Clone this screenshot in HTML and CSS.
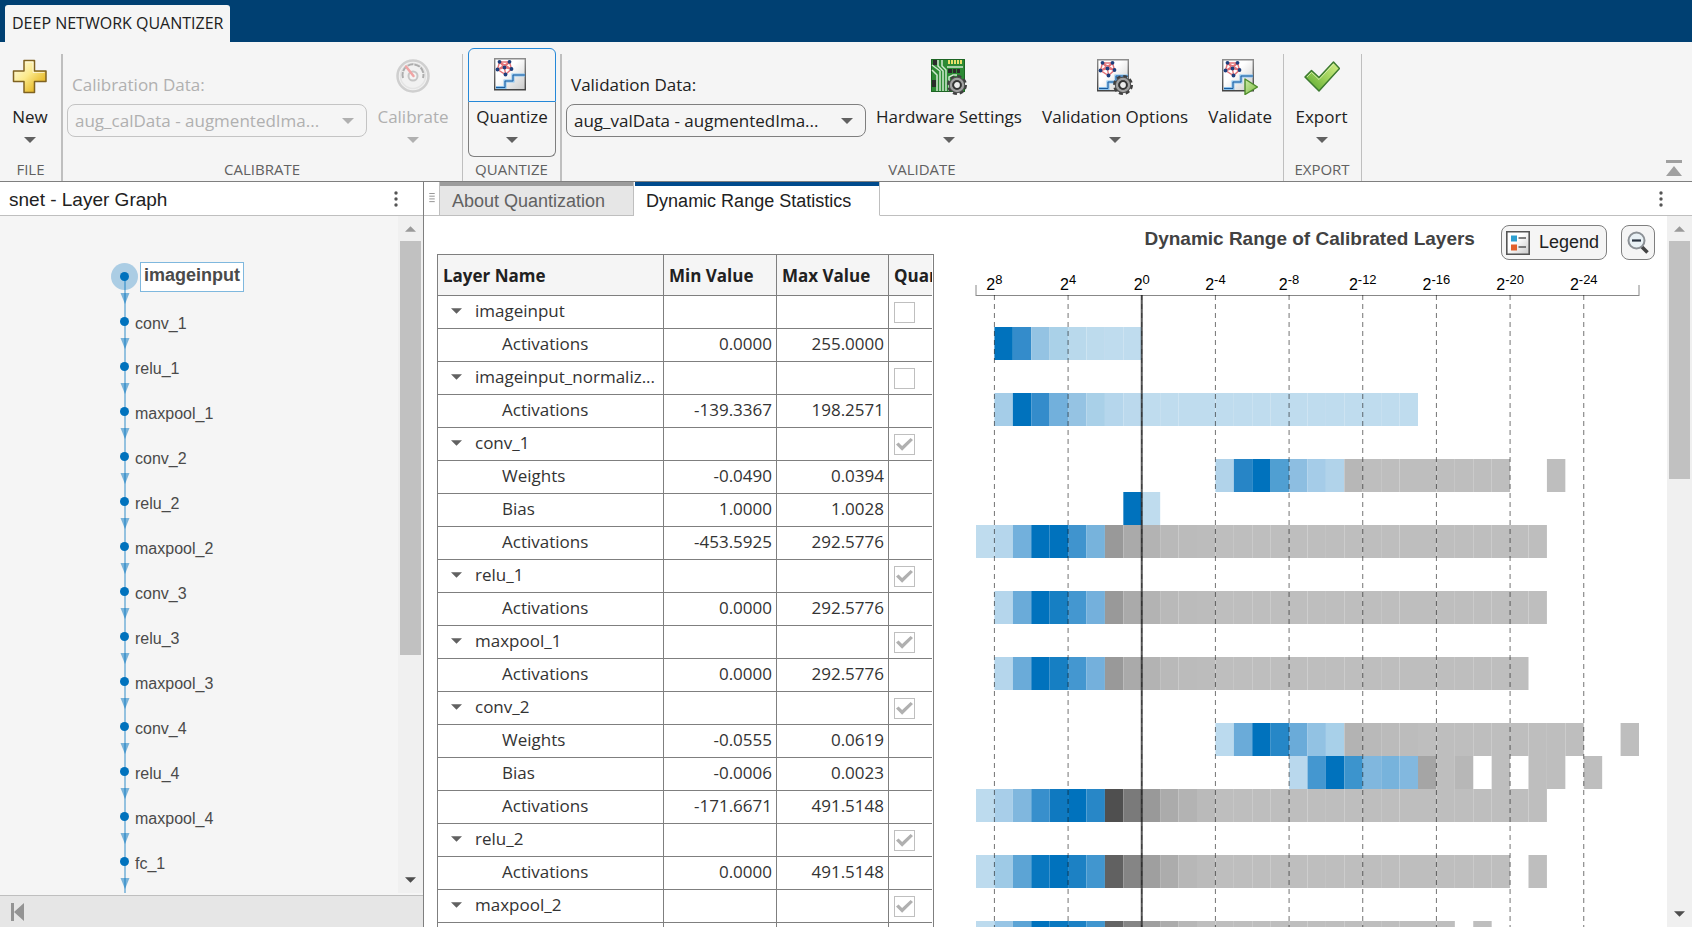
FILE: index.html
```html
<!DOCTYPE html>
<html lang="en">
<head>
<meta charset="utf-8">
<title>Deep Network Quantizer</title>
<link rel="stylesheet" href="styles.css">
</head>
<body>
<svg class="defs" aria-hidden="true">
  <defs>
    <linearGradient id="gold" x1="0" y1="0" x2="1" y2="1"><stop offset="0" stop-color="#fffef0"/><stop offset=".45" stop-color="#fbe98a"/><stop offset=".75" stop-color="#e9bf35"/><stop offset="1" stop-color="#dfa92a"/></linearGradient>
    <linearGradient id="paper" x1="0" y1="0" x2="1" y2="1"><stop offset=".4" stop-color="#ffffff"/><stop offset="1" stop-color="#c9c9c9"/></linearGradient>
    <linearGradient id="frame" x1="0" y1="0" x2="0" y2="1"><stop offset="0" stop-color="#8c8c8c"/><stop offset="1" stop-color="#454545"/></linearGradient>
    <linearGradient id="leaf" x1="1" y1="0" x2="0" y2="1"><stop offset="0" stop-color="#d5ee8a"/><stop offset=".5" stop-color="#9bd058"/><stop offset="1" stop-color="#4ea02a"/></linearGradient>
    <linearGradient id="play" x1="0" y1="0" x2="1" y2="1"><stop offset="0" stop-color="#cdebaa"/><stop offset="1" stop-color="#7cba3c"/></linearGradient>
    <symbol id="caret" viewBox="0 0 12 6"><path d="M0 0h12L6 6z" fill="currentColor"/></symbol>
    <symbol id="dots" viewBox="0 0 4 16"><g fill="#555"><circle cx="2" cy="2" r="1.7"/><circle cx="2" cy="8" r="1.7"/><circle cx="2" cy="14" r="1.7"/></g></symbol>
    <symbol id="net" viewBox="0 0 36 36">
      <path d="M.7 .7h30.6v31H.7z" fill="url(#paper)" stroke="url(#frame)" stroke-width="1.4"/>
      <path d="M2 29.500H11V23h8v-6h12" fill="none" stroke="#8cc4ee" stroke-width="3"/>
      <path d="M2 29.500H11V23h8v-6h12" fill="none" stroke="#1c5b9c" stroke-width="1"/>
      <path d="M5.500 4 15.500 4 17.500 11 11.500 16.500 3.500 11.500zM5.500 4 10.500 9.500 15.500 4M3.500 11.500 10.500 9.500 17.500 11M10.500 9.500l1 7M5.500 4 17.500 11M15.500 4 3.500 11.500" fill="none" stroke="#dc4f55" stroke-opacity=".8" stroke-width="1.400"/>
      <g fill="#1e3f7d"><circle cx="5.500" cy="3.800" r="1.900"/><circle cx="15.500" cy="3.800" r="1.900"/><circle cx="17.500" cy="11" r="1.900"/><circle cx="11.500" cy="16.500" r="1.900"/><circle cx="3.500" cy="11.500" r="1.900"/><circle cx="10.500" cy="9.500" r="1.900"/></g>
    </symbol>
    <symbol id="gear" viewBox="0 0 20 20">
      <circle cx="10" cy="10" r="8.200" fill="none" stroke="#3f3f3f" stroke-width="3.600" stroke-dasharray="3.800 2.640"/>
      <circle cx="10" cy="10" r="6" fill="#d2d2d2" stroke="#4d4d4d" stroke-width="4.400"/>
      <circle cx="10" cy="10" r="6" fill="none" stroke="#a0a0a0" stroke-width="2.400"/>
      <circle cx="10" cy="10" r="3.800" fill="#ececec" stroke="#333" stroke-width="1.800"/>
    </symbol>
    <symbol id="node" viewBox="0 0 25 45" overflow="visible">
      <path d="M15 14v45" stroke="#0072bd" stroke-opacity=".4" stroke-width="2"/>
      <path d="M10.500 31h9l-4.500 11z" fill="#0072bd" fill-opacity=".5"/>
      <circle cx="14.500" cy="14.500" r="4.500" fill="#0072bd"/>
    </symbol>
  </defs>
</svg>

<div class="app">
  <header class="titlebar">
    <button class="app-tab" type="button">DEEP NETWORK QUANTIZER</button>
  </header>

  <div class="ribbon">
    <section class="group group-file">
      <div class="group-body">
        <button class="tool" type="button">
          <svg class="icon" viewBox="0 0 36 36"><path d="M12 1.500h10.500v10.500H34v10.500H22.500v11H12v-11H1.500V12H12z" fill="url(#gold)" stroke="#7f6220" stroke-width="1.500" stroke-linejoin="round"/><path d="M13.500 3h7.500v10.500h11.500" fill="none" stroke="#fff" stroke-opacity=".6"/></svg>
          <span class="tool-label">New</span>
          <svg class="caret"><use href="#caret"/></svg>
        </button>
      </div>
      <h2 class="group-title">FILE</h2>
    </section>
    <section class="group group-calibrate">
      <div class="group-body">
        <div class="field is-disabled">
          <label for="cal-data">Calibration Data:</label>
          <div class="select-box">
            <select id="cal-data" disabled><option>aug_calData - augmentedIma...</option></select>
            <svg class="caret"><use href="#caret"/></svg>
          </div>
        </div>
        <button class="tool is-disabled" type="button" disabled>
          <svg class="icon" viewBox="0 0 36 36"><circle cx="18" cy="17" r="15.500" fill="#f1f1f1" stroke="#cfcfcf" stroke-width="2.500"/><circle cx="18" cy="17" r="12.500" fill="none" stroke="#e4e4e4" stroke-width="1.500"/><path d="M8 19a10.500 10.500 0 1 1 20 0" fill="none" stroke="#adadad" stroke-width="2" stroke-dasharray="6 1"/><circle cx="18" cy="17" r="4.500" fill="#f4f4f4" stroke="#c6c6c6" stroke-width="2"/><path d="M11 7.500l7.500 9.500" stroke="#f0a4a4" stroke-width="2.500" stroke-linecap="round"/></svg>
          <span class="tool-label">Calibrate</span>
          <svg class="caret"><use href="#caret"/></svg>
        </button>
      </div>
      <h2 class="group-title">CALIBRATE</h2>
    </section>
    <section class="group group-quantize">
      <div class="group-body">
        <div class="split">
          <button class="split-main" type="button" aria-label="Quantize"><svg class="icon"><use href="#net"/></svg></button>
          <button class="split-menu" type="button"><span class="tool-label">Quantize</span><svg class="caret"><use href="#caret"/></svg></button>
        </div>
      </div>
      <h2 class="group-title">QUANTIZE</h2>
    </section>
    <section class="group group-validate">
      <div class="group-body">
        <div class="field">
          <label for="val-data">Validation Data:</label>
          <div class="select-box">
            <select id="val-data"><option>aug_valData - augmentedIma...</option></select>
            <svg class="caret"><use href="#caret"/></svg>
          </div>
        </div>
        <button class="tool" type="button">
          <svg class="icon" viewBox="0 0 36 36"><path d="M0 0h34v33H0z" fill="#2c8a34"/><path d="M.5 .5h33v32H.5z" fill="none" stroke="#1d6424"/><path d="M2 1h4v5H2zM1 21h4v7H1zM17 10h4v4h-4zM22 10h3v4h-3zM26 10h3v4h-3z" fill="#2b2b2b"/><path d="M17 1h2v4h-2zM20 1h2v4h-2zM23 1h2v4h-2zM26 1h2v4h-2zM29 1h2v4h-2z" fill="#e8e06a"/><path d="M1 6l8 6v20M1 11l5 5v16M7 1v6l5 5v20M11 1v6l4 4v21M16 8h16M18 32V18l4-2h4" fill="none" stroke="#cfe8cf" stroke-width="1.500"/><use href="#gear" x="16" y="16" width="20" height="20"/></svg>
          <span class="tool-label">Hardware Settings</span>
          <svg class="caret"><use href="#caret"/></svg>
        </button>
        <button class="tool" type="button">
          <svg class="icon" viewBox="0 0 36 36"><use href="#net" width="36" height="36"/><use href="#gear" x="16" y="16" width="20" height="20"/></svg>
          <span class="tool-label">Validation Options</span>
          <svg class="caret"><use href="#caret"/></svg>
        </button>
        <button class="tool" type="button">
          <svg class="icon" viewBox="0 0 36 36"><use href="#net" width="36" height="36"/><path d="M23 20l12.500 8L23 35.500z" fill="url(#play)" stroke="#4c8a2a" stroke-width="1.400" stroke-linejoin="round"/></svg>
          <span class="tool-label">Validate</span>
        </button>
      </div>
      <h2 class="group-title">VALIDATE</h2>
    </section>
    <section class="group group-export">
      <div class="group-body">
        <button class="tool" type="button">
          <svg class="icon" viewBox="0 0 36 36"><path d="M1 18l6.500-6.500 7.500 7L29.500 3l6 6.500L15 32z" fill="url(#leaf)" stroke="#3c7a30" stroke-width="1.500" stroke-linejoin="round"/><path d="M3 18l4.500-4.500 7.500 7L29.500 5" fill="none" stroke="#e6f5c8" stroke-opacity=".7"/></svg>
          <span class="tool-label">Export</span>
          <svg class="caret"><use href="#caret"/></svg>
        </button>
      </div>
      <h2 class="group-title">EXPORT</h2>
    </section>
    <button class="collapse" type="button" aria-label="Collapse toolstrip"><svg viewBox="0 0 16 16"><path d="M0 0h16v3H0zM8 6l8 10H0z" fill="#a0a0a0"/></svg></button>
  </div>

  <div class="workspace">
    <aside class="graph-panel">
      <div class="panel-head">
        <h1>snet - Layer Graph</h1>
        <button class="more" type="button" aria-label="Layer graph options"><svg><use href="#dots"/></svg></button>
      </div>
      <div class="graph-body">
        <ol class="layers">
          <li class="selected"><svg><circle cx="14.500" cy="14.500" r="13.500" fill="#0072bd" fill-opacity=".3"/><use href="#node" width="25" height="45"/></svg><span>imageinput</span></li>
          <li><svg><use href="#node"/></svg><span>conv_1</span></li>
          <li><svg><use href="#node"/></svg><span>relu_1</span></li>
          <li><svg><use href="#node"/></svg><span>maxpool_1</span></li>
          <li><svg><use href="#node"/></svg><span>conv_2</span></li>
          <li><svg><use href="#node"/></svg><span>relu_2</span></li>
          <li><svg><use href="#node"/></svg><span>maxpool_2</span></li>
          <li><svg><use href="#node"/></svg><span>conv_3</span></li>
          <li><svg><use href="#node"/></svg><span>relu_3</span></li>
          <li><svg><use href="#node"/></svg><span>maxpool_3</span></li>
          <li><svg><use href="#node"/></svg><span>conv_4</span></li>
          <li><svg><use href="#node"/></svg><span>relu_4</span></li>
          <li><svg><use href="#node"/></svg><span>maxpool_4</span></li>
          <li><svg><use href="#node"/></svg><span>fc_1</span></li>
        </ol>
        <div class="scrollbar">
          <svg class="scroll-arrow up"><use href="#caret"/></svg>
          <div class="scroll-track"><div class="scroll-thumb graph-thumb"></div></div>
          <svg class="scroll-arrow"><use href="#caret"/></svg>
        </div>
      </div>
      <div class="graph-foot">
        <button type="button" aria-label="Collapse panel"><svg viewBox="0 0 14 18"><path d="M0 0h3v18H0zM13 0v18L3 9z" fill="#949494"/></svg></button>
      </div>
    </aside>

    <main class="docs">
      <div class="doc-tabs">
        <svg class="grip" viewBox="0 0 6 11"><path d="M0 .5h6M0 3.500h6M0 6.500h6M0 9.500h6" stroke="#8a8a8a"/></svg>
        <button class="doc-tab" type="button">About Quantization</button>
        <button class="doc-tab active" type="button">Dynamic Range Statistics</button>
        <div class="tab-rest"><button class="more" type="button" aria-label="Document options"><svg><use href="#dots"/></svg></button></div>
      </div>
      <div class="doc-body">
        <div class="doc-content">
          <div class="table-frame">
            <div class="table-clip">
              <table>
                <colgroup><col class="col-name"><col class="col-min"><col class="col-max"><col class="col-quant"></colgroup>
                <thead><tr><th scope="col">Layer Name</th><th scope="col">Min Value</th><th scope="col">Max Value</th><th scope="col">Quantize</th></tr></thead>
                <tbody id="rows"></tbody>
              </table>
            </div>
          </div>
          <div class="chart">
            <div class="chart-head">
              <h2>Dynamic Range of Calibrated Layers</h2>
              <button class="chart-button" type="button">
                <svg width="24" height="24" viewBox="0 0 24 24"><path d="M.8 .8h22.400v22.400H.8z" fill="url(#paper)" stroke="#555" stroke-width="1.600"/><path d="M5 4.500h6v6H5z" fill="#2d9fd0"/><path d="M5 13.500h6v6H5z" fill="#e2602c"/><path d="M12.500 7h7.500M12.500 16h7.500" stroke="#555" stroke-width="1.500"/></svg>
                Legend
              </button>
              <button class="chart-button zoom" type="button" aria-label="Zoom out">
                <svg width="24" height="24" viewBox="0 0 24 24"><path d="M15 15l6.500 6.500" stroke="#444" stroke-width="3.500"/><circle cx="10.500" cy="9.500" r="8" fill="#e9f1f5" stroke="#8c9196" stroke-width="2"/><path d="M6 9.500h9" stroke="#2a3440" stroke-width="2.200"/></svg>
              </button>
            </div>
            <svg class="plot" id="plot" role="img" aria-label="Dynamic range histogram of calibrated layers"></svg>
          </div>
        </div>
        <div class="scrollbar">
          <svg class="scroll-arrow up"><use href="#caret"/></svg>
          <div class="scroll-track"><div class="scroll-thumb doc-thumb"></div></div>
          <svg class="scroll-arrow"><use href="#caret"/></svg>
        </div>
      </div>
    </main>
  </div>
</div>
<script src="script.js"></script>
</body>
</html>
```

FILE: styles.css
```css
* { box-sizing: border-box; }

body {
  margin: 0;
  height: 100vh;
  overflow: hidden;
  background: #fff;
  color: #212121;
  font-family: "Open Sans", "Noto Sans", sans-serif;
  font-size: 17px;
}

h1, h2 { margin: 0; font-weight: 400; }

button {
  margin: 0;
  padding: 0;
  border: 0;
  background: none;
  color: inherit;
  font: inherit;
}

svg { display: block; flex: none; }

.defs { position: absolute; width: 0; height: 0; }

.app {
  display: flex;
  flex-direction: column;
  height: 100vh;
}

/* Title bar */
.titlebar {
  display: flex;
  flex: none;
  height: 42px;
  padding: 5px 5px 0;
  background: #004072;
}

.app-tab {
  padding: 0 7px 2px;
  border-radius: 3px 3px 0 0;
  background: #f5f5f5;
  font-size: 16px;
}

/* Toolstrip */
.ribbon {
  display: flex;
  flex: none;
  height: 140px;
  border-bottom: 1px solid #7f7f7f;
  background: #f5f5f5;
}

.group {
  display: flex;
  flex: none;
  flex-direction: column;
  padding-top: 6px;
  background: linear-gradient(#bfbfbf, #bfbfbf) right 12px / 1px 100% no-repeat;
}

.group-file { width: 63px; background-size: 2px 100%; }
.group-calibrate { width: 400px; }
.group-quantize { width: 99px; background-size: 2px 100%; }
.group-validate { width: 722px; }
.group-export { width: 78px; }

.group-body {
  display: flex;
  justify-content: space-evenly;
  height: 109px;
  padding: 0 4px;
}

.group-file .group-body, .group-export .group-body { padding-right: 7px; }
.group-quantize .group-body { padding: 0 6px 0 5px; }
.group-validate .group-body { padding-right: 2px; }

.group-title {
  padding-right: 2px;
  color: #616161;
  font-size: 15px;
  line-height: 24px;
  text-align: center;
}

.tool {
  display: flex;
  flex: 1 0 auto;
  flex-direction: column;
  align-items: center;
  padding-top: 11px;
}

.icon { width: 36px; height: 36px; }

.tool-label {
  margin-top: 10px;
  line-height: 24px;
  white-space: nowrap;
}

.caret {
  width: 12px;
  height: 6px;
  margin-top: 8px;
  color: #616161;
}

.is-disabled, .is-disabled .caret, .is-disabled select { color: #b0b0b0; opacity: 1; }

.field {
  display: flex;
  flex: none;
  flex-direction: column;
  width: 300px;
  padding-top: 24px;
}

.field label { padding-left: 5px; line-height: 26px; }

.select-box { display: grid; align-items: center; margin-top: 6px; }

.select-box > * { grid-area: 1 / 1; }

.select-box select {
  appearance: none;
  height: 33px;
  padding: 0 40px 0 7px;
  border: 1px solid #7f7f7f;
  border-radius: 8px;
  background: #f5f5f5;
  color: #212121;
  font: inherit;
}

.select-box .caret { justify-self: end; margin: 0 13px 0 0; pointer-events: none; }

.is-disabled .select-box select { border-color: #c4c4c4; color: #b0b0b0; }

.split { display: flex; flex: 1; flex-direction: column; }

.split-main {
  display: flex;
  justify-content: center;
  height: 54px;
  padding-top: 9px;
  border: 1px solid #2488d8;
  border-radius: 6px 6px 0 0;
}

.split-menu {
  display: flex;
  flex: 1;
  flex-direction: column;
  align-items: center;
  border: 1px solid #7f7f7f;
  border-top: 0;
  border-radius: 0 0 6px 6px;
}

.split-menu .tool-label { margin-top: 3px; }

.collapse { align-self: flex-end; margin: 0 10px 5px auto; }
.collapse svg { width: 16px; height: 16px; }

/* Workspace */
.workspace { display: flex; flex: 1; min-height: 0; }

.graph-panel {
  display: flex;
  flex: none;
  flex-direction: column;
  box-sizing: content-box;
  width: 25%;
  border-right: 1px solid #7f7f7f;
  font-family: "Liberation Sans", Arial, sans-serif;
}

.panel-head {
  display: flex;
  flex: none;
  align-items: center;
  justify-content: space-between;
  height: 34px;
  padding: 0 25px 0 9px;
  border-bottom: 1px solid #bfbfbf;
}

.panel-head h1 { padding-top: 3px; font-size: 19px; }

.more svg { width: 4px; height: 16px; }

.graph-body {
  display: flex;
  flex: 1;
  min-height: 0;
  background: #f5f5f5;
}

.layers {
  flex: 1;
  margin: 0 0 2px;
  padding: 46px 0 0 110px;
  overflow: hidden;
  list-style: none;
  color: #4a4a4a;
  font-size: 16px;
}

.layers li { display: flex; height: 45px; }

.layers svg { width: 25px; height: 45px; overflow: visible; }

.layers span { line-height: 34px; }

.layers .selected span {
  height: 30px;
  margin-left: 5px;
  padding: 0 3px;
  border: 1px solid #7fb8de;
  background: #fff;
  font-size: 18px;
  font-weight: 700;
  line-height: 25px;
}

.scrollbar {
  display: flex;
  flex: none;
  flex-direction: column;
  align-items: center;
  width: 25px;
  padding: 10px 0;
  background: #f0f0f0;
  color: #4d4d4d;
}

.graph-body .scrollbar { margin-bottom: 2px; }

.scroll-arrow { width: 11px; height: 6px; }

.scroll-arrow.up { transform: rotate(180deg); color: #9a9a9a; }

.scroll-track { flex: 1; width: 21px; padding: 9px 0; }

.scroll-thumb { background: #c1c1c1; }

.graph-thumb { height: 66%; }
.doc-thumb { height: 36%; }

.graph-foot {
  display: flex;
  flex: none;
  align-items: center;
  height: 32px;
  padding-left: 11px;
  border-top: 1px solid #bfbfbf;
  background: #e6e6e6;
}

.graph-foot svg { width: 14px; height: 18px; }

/* Documents */
.docs { display: flex; flex: 1; flex-direction: column; min-width: 0; }

.doc-tabs {
  display: flex;
  flex: none;
  height: 34px;
  font-family: "Liberation Sans", Arial, sans-serif;
  font-size: 18px;
}

.grip { width: 15px; height: 34px; padding: 11px 4px 12px 5px; border-bottom: 1px solid #bfbfbf; }

.doc-tab {
  padding: 6px 28px 0 12px;
  border: solid #bfbfbf;
  border-width: 0 1px 1px;
  background: #e6e6e6;
  box-shadow: inset 0 4px #9c9c9c;
  color: #616161;
  white-space: nowrap;
}

.doc-tab.active {
  padding-left: 11px;
  border-left-color: #fff;
  border-bottom-color: #fff;
  background: #fff;
  box-shadow: inset 0 4px #004a8c;
  color: #212121;
}

.tab-rest {
  display: flex;
  flex: 1;
  align-items: center;
  justify-content: flex-end;
  padding-right: 29px;
  border-bottom: 1px solid #bfbfbf;
}

.doc-body { display: flex; flex: 1; min-height: 0; overflow: hidden; }

.doc-content {
  display: grid;
  flex: 1;
  grid-template-columns: 497px minmax(0, 1fr);
  min-width: 0;
  padding-left: 13px;
  overflow: hidden;
}

/* Statistics table */
.table-frame {
  align-self: start;
  margin-top: 38px;
  padding-right: 1px;
  border: 1px solid #7f7f7f;
}

.table-clip { overflow: hidden; }

table {
  width: 560px;
  table-layout: fixed;
  border-collapse: separate;
  border-spacing: 0;
}

.col-name { width: 226px; }
.col-min { width: 113px; }
.col-max { width: 112px; }

th, td {
  padding: 0 4px 0 5px;
  border: solid #7f7f7f;
  border-width: 0 1px 1px 0;
  white-space: nowrap;
}

th {
  height: 41px;
  background: #f5f5f5;
  font-weight: 700;
  text-align: left;
}

td { height: 33px; padding-bottom: 3px; color: #333; text-align: right; }

td.name { padding-left: 64px; text-align: left; }

td.parent { padding-left: 13px; }

.name-row { display: flex; align-items: center; gap: 13px; }

.toggle { color: #616161; }
.toggle svg { width: 11px; height: 6px; }

td.quant { padding-top: 1px; padding-bottom: 0; text-align: left; }

td.quant input {
  display: block;
  appearance: none;
  width: 21px;
  height: 21px;
  margin: 0;
  border: 1px solid #bfbfbf;
  background: #fff;
}

td.quant input:checked::before {
  content: "";
  display: block;
  width: 17px;
  height: 15px;
  margin: 2px 1px;
  background: #b0b0b0;
  clip-path: polygon(0 50%, 15% 36%, 36% 60%, 86% 6%, 100% 20%, 36% 92%);
}

/* Chart */
.chart { display: flex; flex-direction: column; min-width: 0; }

.chart-head {
  display: flex;
  flex: none;
  align-items: flex-start;
  justify-content: flex-end;
  height: 54px;
  padding: 9px 12px 0 0;
  font-family: "Liberation Sans", Arial, sans-serif;
}

.chart-head h2 {
  margin-right: 26px;
  color: #424242;
  font-size: 19px;
  font-weight: 700;
  line-height: 28px;
  white-space: nowrap;
}

.chart-button {
  display: flex;
  align-items: center;
  gap: 9px;
  height: 35px;
  padding: 0 7px 0 4px;
  border: 1px solid #7f7f7f;
  border-radius: 8px;
  background: #f5f5f5;
  font-size: 18px;
}

.chart-button.zoom { margin-left: 14px; padding: 0 4px; }

.plot {
  align-self: stretch;
  width: auto;
  height: 660px;
  margin: 0 28px 0 42px;
  overflow: visible;
  font-family: "Liberation Sans", Arial, sans-serif;
  font-size: 16px;
}

.plot .power { font-size: 13px; }
.plot .axis { stroke: #888; stroke-width: 1; fill: none; }
.plot .guide { stroke: #000; stroke-opacity: .55; stroke-width: 1; stroke-dasharray: 5 4; }
.plot .zero { stroke: #222; stroke-opacity: .75; stroke-width: 2; }
```

FILE: script.js
```js
const BINS = 36;
const ROW = 33;
const GRAY = "#bebebe";
const fade = ["#b9b9b9", "#bbbbbb", "#bcbcbc"];

/* Each bar: first bin, leading colours, bin where the gray run ends, extra gray bins. */
const layers = [
  { name: "imageinput", quantized: false, rows: [
    ["Activations", "0.0000", "255.0000", { from: 1, colors: ["#0072bd", "#348ccb", "#94c3e3", "#aad1e8", "#b9d9ec", "#bddbed", "#bfdcee", "#bfdcee"] }]] },
  { name: "imageinput_normaliz...", quantized: false, rows: [
    ["Activations", "-139.3367", "198.2571", { from: 1, colors: ["#a5cde8", "#0072bd", "#348ccb", "#72b0dc", "#95c3e3", "#a9d0e8", "#b5d6ec", "#bbd9ed"], to: 24, rest: "#bfdcee" }]] },
  { name: "conv_1", quantized: true, rows: [
    ["Weights", "-0.0490", "0.0394", { from: 13, colors: ["#b1d3ea", "#2785c6", "#0072bd", "#509fd2", "#8dbee1", "#a5cce8", "#b1d3ea", "#b7b7b7"], to: 29, extra: [31] }],
    ["Bias", "1.0000", "1.0028", { from: 8, colors: ["#0072bd", "#bfdcee"] }],
    ["Activations", "-453.5925", "292.5776", { from: 0, colors: ["#bfdcee", "#b5d6ec", "#72b0dc", "#0072bd", "#0072bd", "#4094ce", "#77b3dc", "#999999", "#aaaaaa", "#b3b3b3", ...fade], to: 31 }]] },
  { name: "relu_1", quantized: true, rows: [
    ["Activations", "0.0000", "292.5776", { from: 1, colors: ["#b5d6ec", "#6aabd9", "#0072bd", "#167fc3", "#4497d0", "#74b0dc", "#999999", "#aaaaaa", "#b3b3b3", ...fade], to: 31 }]] },
  { name: "maxpool_1", quantized: true, rows: [
    ["Activations", "0.0000", "292.5776", { from: 1, colors: ["#b5d6ec", "#6aabd9", "#0072bd", "#167fc3", "#4497d0", "#74b0dc", "#999999", "#aaaaaa", "#b3b3b3", ...fade], to: 30 }]] },
  { name: "conv_2", quantized: true, rows: [
    ["Weights", "-0.0555", "0.0619", { from: 13, colors: ["#bbdaee", "#6aabd9", "#0072bd", "#2687c7", "#6aabd9", "#92c2e3", "#a8d0e9", "#b3b3b3", ...fade], to: 33, extra: [35] }],
    ["Bias", "-0.0006", "0.0023", { from: 17, colors: ["#b9d8ed", "#4497d0", "#0072bd", "#3c94cd", "#80b7de", "#77b3dc", "#82b8df", "#a5a5a5", "#bebebe", "#b7b7b7"], extra: [28, 30, 31, 33] }],
    ["Activations", "-171.6671", "491.5148", { from: 0, colors: ["#bddbee", "#a8cee9", "#80b7de", "#388fcc", "#0f79c0", "#0072bd", "#2887c7", "#4f4f4f", "#7a7a7a", "#999999", "#ababab", "#b3b3b3", "#bababa"], to: 31 }]] },
  { name: "relu_2", quantized: true, rows: [
    ["Activations", "0.0000", "491.5148", { from: 0, colors: ["#bddbee", "#9ecae6", "#5ca4d5", "#0978c0", "#0072bd", "#1c81c4", "#4196cf", "#616161", "#858585", "#9f9f9f", "#acacac", "#b7b7b7", "#bbbbbb"], to: 29, extra: [30] }]] },
  { name: "maxpool_2", quantized: true, rows: [
    ["", "", "", { from: 0, colors: ["#bddbee", "#98c5e5", "#5ca4d5", "#0072bd", "#0978c0", "#1c81c4", "#4196cf", "#646464", "#858585", "#9f9f9f", "#acacac", "#b7b7b7"], to: 26, extra: [27] }]] }
];

const pct = bin => (bin / BINS * 100).toFixed(4) + "%";
let table = "";
let bars = "";
let row = 0;

const cell = (bin, color) => {
  bars += `<rect x="${pct(bin)}" y="${24 + row * ROW}" width="${pct(1)}" height="${ROW}" fill="${color}"/>`;
};

for (const layer of layers) {
  table += `<tr><td class="name parent"><div class="name-row"><button class="toggle" type="button" aria-label="Toggle ${layer.name}"><svg><use href="#caret"/></svg></button>${layer.name}</div></td><td></td><td></td><td class="quant"><input type="checkbox" aria-label="Quantize ${layer.name}" disabled${layer.quantized ? " checked" : ""}></td></tr>`;
  row++;
  for (const [name, min, max, bar] of layer.rows) {
    table += `<tr><td class="name">${name}</td><td>${min}</td><td>${max}</td><td></td></tr>`;
    bar.colors.forEach((color, i) => cell(bar.from + i, color));
    for (let b = bar.from + bar.colors.length; b < (bar.to || 0); b++) cell(b, bar.rest || GRAY);
    (bar.extra || []).forEach(b => cell(b, GRAY));
    row++;
  }
}

let axis = `<line class="axis" x1="0" x2="100%" y1="25.500" y2="25.500"/><line class="axis" x1="0" x2="0" y1="15" y2="26"/><line class="axis" x1="100%" x2="100%" y1="15" y2="26"/>`;
for (let power = 8; power >= -24; power -= 4) {
  const x = pct(9 - power);
  axis += `<line class="guide" x1="${x}" x2="${x}" y1="25" y2="100%"/>`;
  axis += `<text x="${x}" y="20" text-anchor="middle">2<tspan class="power" dy="-6">${power}</tspan></text>`;
}
axis += `<line class="zero" x1="${pct(9)}" x2="${pct(9)}" y1="25" y2="100%"/>`;

document.getElementById("rows").innerHTML = table;
document.getElementById("plot").innerHTML = bars + axis;
```
